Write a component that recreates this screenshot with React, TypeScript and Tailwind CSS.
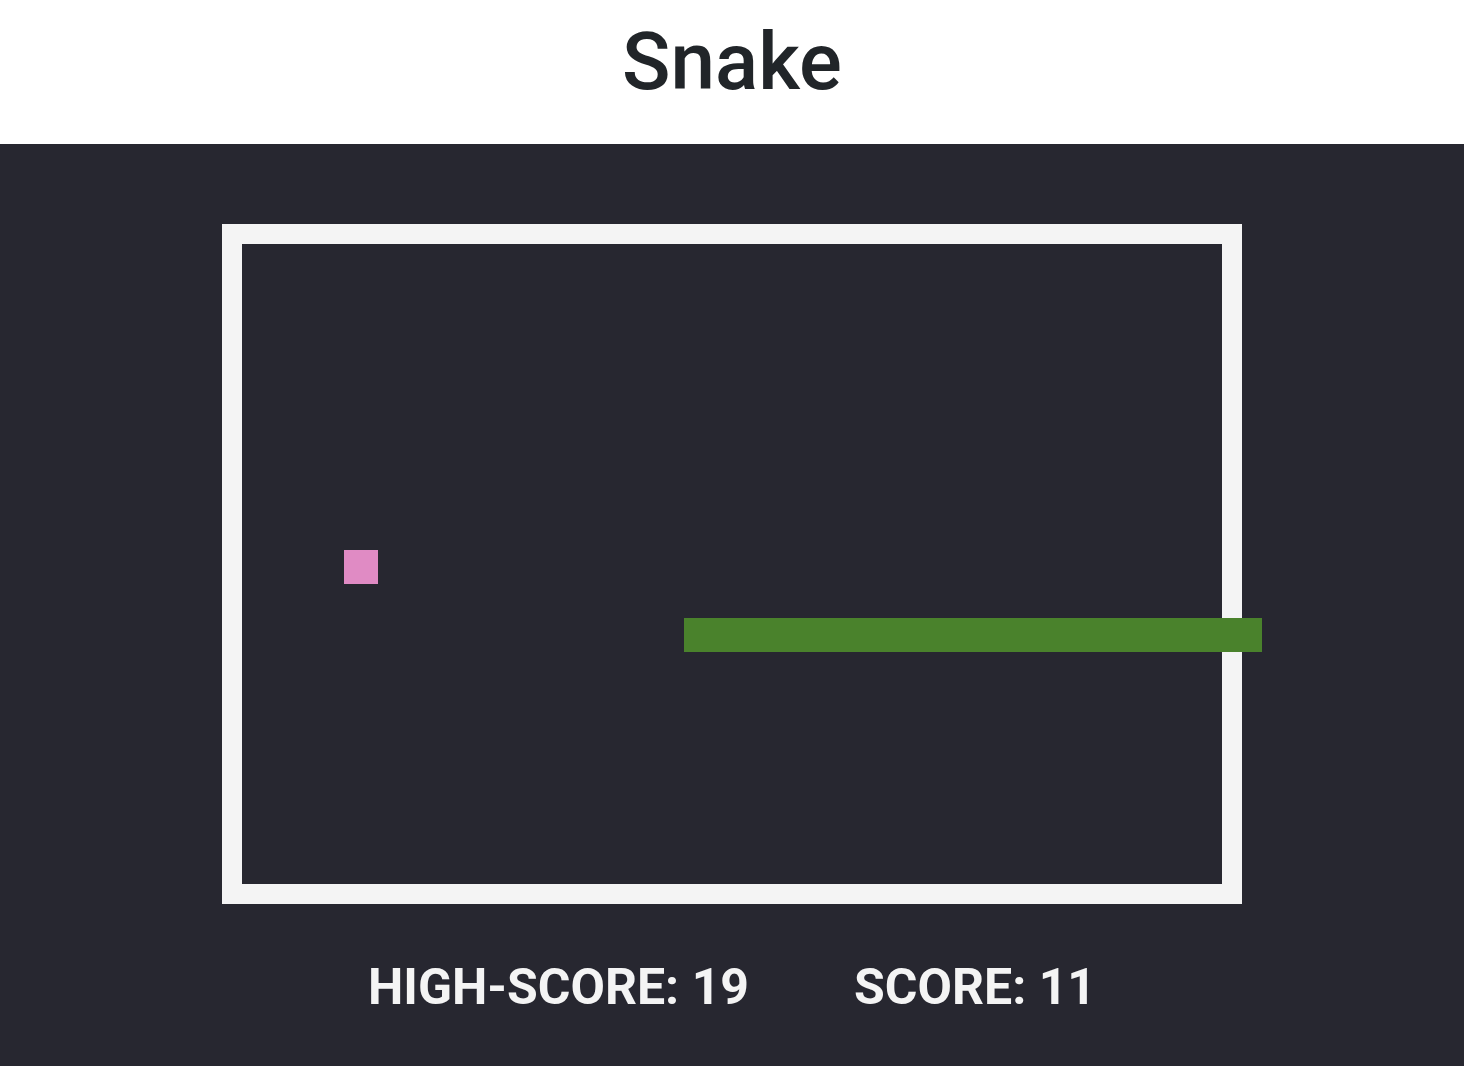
import React from 'react';

const CELL = 34;

// Game state snapshot: food and snake segments on the grid
const food = { x: 3, y: 9 };
const snake = Array.from({ length: 17 }, (_, i) => ({ x: 13 + i, y: 11 }));

export default function App() {
  return (
    <div className="min-h-screen flex flex-col" style={{ fontFamily: 'Roboto, "Liberation Sans", sans-serif' }}>
      <header className="h-[144px] bg-white flex items-center justify-center pb-[20px]">
        <h1 className="text-[80px] leading-none text-[#212529] font-medium">Snake</h1>
      </header>

      <main className="flex-1 bg-[#272730] flex flex-col items-center pt-[80px]">
        {/* board */}
        <div className="w-[1020px] h-[680px] border-[20px] border-[#f4f4f4] relative">
          <div
            className="absolute bg-[#e08bc4]"
            style={{ left: food.x * CELL, top: food.y * CELL, width: CELL, height: CELL }}
          />
          {snake.map((s, i) => (
            <div
              key={i}
              className="absolute bg-[#4a822c]"
              style={{ left: s.x * CELL, top: s.y * CELL, width: CELL, height: CELL }}
            />
          ))}
        </div>

        <div className="flex gap-[105px] mt-[58px] text-[50px] font-bold text-[#f4f4f4] leading-none">
          <span>HIGH-SCORE: 19</span>
          <span>SCORE: 11</span>
        </div>
      </main>
    </div>
  );
}
